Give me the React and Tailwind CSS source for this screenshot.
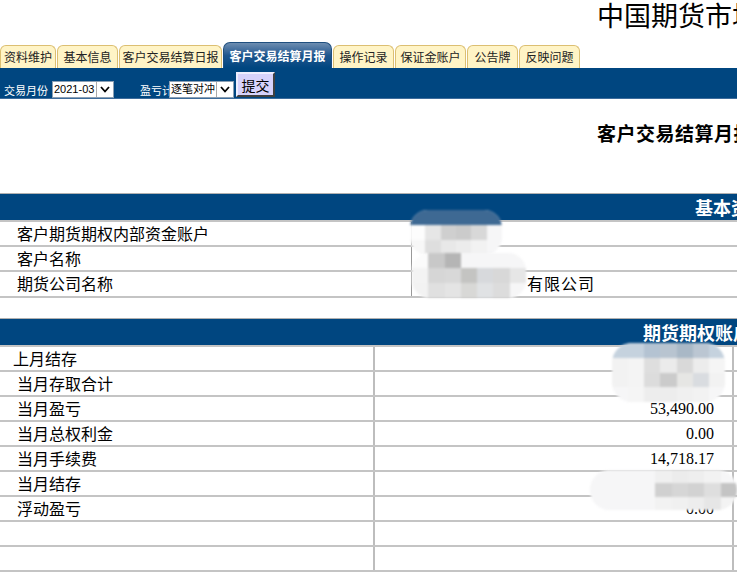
const cjk = { fontFamily: '"Noto Sans CJK SC", "Noto Sans", sans-serif' }
const serif = { fontFamily: '"Liberation Serif", "Noto Sans CJK SC", serif' }

const tabs = [
  { label: '资料维护', w: 'w-[56px]' },
  { label: '基本信息', w: 'w-[61px]' },
  { label: '客户交易结算日报', w: 'w-[103px]' },
  { label: '客户交易结算月报', w: 'w-[109px]', active: true },
  { label: '操作记录', w: 'w-[61px]' },
  { label: '保证金账户', w: 'w-[71px]' },
  { label: '公告牌', w: 'w-[51px]' },
  { label: '反映问题', w: 'w-[61px]' },
]

const basicRows = [
  { label: '客户期货期权内部资金账户', h: 'h-[25px]' },
  { label: '客户名称', h: 'h-[25px]' },
  { label: '期货公司名称', h: 'h-[26px]', company: true },
]

const accountRows = [
  { label: '上月结存', value: '', first: true },
  { label: '当月存取合计', value: '' },
  { label: '当月盈亏', value: '53,490.00' },
  { label: '当月总权利金', value: '0.00' },
  { label: '当月手续费', value: '14,718.17' },
  { label: '当月结存', value: '' },
  { label: '浮动盈亏', value: '0.00' },
  { label: '', value: '' },
  { label: '', value: '' },
]

function FakeSelect({ text, w }) {
  return (
    <div className={`flex items-stretch h-[17px] bg-white border border-[#8a9fb4] ${w}`}>
      <span className="flex-1 pl-[1px] text-[11px] leading-[15px] text-black overflow-hidden" style={{ fontFamily: '"Liberation Sans", "Noto Sans CJK SC", sans-serif' }}>
        {text}
      </span>
      <span className="w-[17px] flex items-center justify-center bg-white border-l border-[#aaa]">
        <svg width="10" height="7" viewBox="0 0 10 7">
          <path d="M1 1 L5 5.5 L9 1" fill="none" stroke="#000" strokeWidth="1.8" />
        </svg>
      </span>
    </div>
  )
}

function Blob({ className, cells }) {
  return (
    <div className={`absolute rounded-[18px] bg-[#f6f6f7] blur-[1px] overflow-hidden grid ${className}`}>
      {cells.map((c, i) => (
        <div key={i} style={{ background: c }} />
      ))}
    </div>
  )
}

export default function App() {
  return (
    <div className="relative w-full h-[578px] overflow-hidden bg-white whitespace-nowrap" style={cjk}>
      {/* page title */}
      <div className="h-[42px] pl-[597px]">
        <span className="text-[27px] leading-[30px] text-black">中国期货市场监控中心</span>
      </div>

      {/* tabs */}
      <div className="flex items-end h-[26px] gap-[1px]">
        {tabs.map((t) =>
          t.active ? (
            <div
              key={t.label}
              className={`${t.w} h-[26px] rounded-t-[7px] border border-b-0 border-[#1f4f7f] bg-gradient-to-b from-[#6d8db0] via-[#1d568e] to-[#004680] text-white font-bold text-[12px] flex items-center justify-center`}
            >
              {t.label}
            </div>
          ) : (
            <div
              key={t.label}
              className={`${t.w} h-[23px] rounded-t-[6px] border border-b-0 border-[#dcbf72] bg-[#fff4c6] text-[#222] text-[12px] flex items-center justify-center`}
            >
              {t.label}
            </div>
          )
        )}
      </div>

      {/* blue form bar */}
      <div className="h-[31px] bg-[#004680] border-b border-[#3d6c9c] flex items-end text-white text-[11px]">
        <span className="ml-[4px] mb-[1px] leading-[14px] w-[42px]">交易月份</span>
        <div className="ml-[6px]">
          <FakeSelect text="2021-03" w="w-[62px]" />
        </div>
        <span className="ml-[26px] mb-[1px] leading-[14px] w-[29px] overflow-hidden">盈亏计</span>
        <FakeSelect text="逐笔对冲" w="w-[65px]" />
        <button className="ml-[2px] mb-[1px] w-[39px] h-[25px] bg-[#d6d2fb] border-2 border-t-[#eeeeff] border-l-[#eeeeff] border-r-[#404040] border-b-[#404040] text-black text-[14px] leading-[20px]">
          提交
        </button>
      </div>

      {/* report title */}
      <div className="pl-[597px] pt-[22px] h-[94px]">
        <span className="text-[19px] leading-[24px] font-bold text-black tracking-[0.5px]">客户交易结算月报</span>
      </div>

      {/* basic info table */}
      <div className="border-t border-[#b0b0b0]">
        <div className="h-[28px] bg-[#004680] border-b-2 border-[#c4c4c4] pl-[695px] text-white font-bold text-[18px] leading-[26px]">
          基本资料
        </div>
        {basicRows.map((r) => (
          <div key={r.label} className={`flex ${r.h} border-b-2 border-[#c4c4c4]`}>
            <div className="w-[411px] pl-[17px] text-[16px] leading-[23px] text-black">{r.label}</div>
            <div className="flex-1 border-l border-[#999] text-[16px] leading-[23px] text-black">
              {r.company ? <span className="pl-[115px] tracking-[1px]">有限公司</span> : null}
            </div>
          </div>
        ))}
      </div>

      {/* account table */}
      <div className="mt-[20px] border-t border-[#b0b0b0]">
        <div className="h-[28px] bg-[#004680] border-b-2 border-[#c4c4c4] pl-[643px] text-white font-bold text-[18px] leading-[26px]">
          期货期权账户资金状况
        </div>
        {accountRows.map((r, i) => (
          <div key={i} className="flex h-[25px] border-b-2 border-[#c4c4c4]">
            <div className={`w-[373px] text-[16px] leading-[23px] text-black ${r.first ? 'pl-[13px]' : 'pl-[17px]'}`}>
              {r.label}
            </div>
            <div
              className="w-[359px] border-l-2 border-[#bdbdbd] pr-[18px] text-right text-[16px] leading-[24px] text-black"
              style={serif}
            >
              {r.value}
            </div>
            <div className="flex-1 border-l-2 border-[#bdbdbd]" />
          </div>
        ))}
      </div>

      {/* privacy blur patches */}
      <Blob
        className="left-[410px] top-[210px] w-[92px] h-[45px] grid-cols-6 grid-rows-3"
        cells={['#3e6993', '#3e6993', '#3e6993', '#3e6993', '#3e6993', '#3e6993', '#fdfdfd', '#e6e6e6', '#cfcfcf', '#cbcbcb', '#d8d8d8', '#f6f6f7', '#f7f7f7', '#dedede', '#e8e8e8', '#ececec', '#f2f2f2', '#f6f6f7']}
      />
      <Blob
        className="left-[412px] top-[253px] w-[114px] h-[45px] grid-cols-7 grid-rows-3 rounded-[14px]"
        cells={['#fbfbfb', '#c8c8c8', '#b5b5b5', '#f6f6f7', '#f6f6f7', '#f6f6f7', '#f6f6f7', '#f3f3f3', '#d6d6d6', '#d8d8d8', '#c4c4c2', '#d7d9dc', '#d8d8d8', '#e6e6e6', '#f2f2f2', '#e0e0e0', '#e4e4e4', '#d8d8d6', '#e0e2e4', '#dcdcdc', '#f6f6f7']}
      />
      <Blob
        className="left-[612px] top-[343px] w-[113px] h-[59px] grid-cols-7 grid-rows-4 rounded-[20px]"
        cells={['#c5d2de', '#c5d2de', '#b4c3d2', '#b8c4d0', '#a9b8c6', '#bbc6d2', '#c5d2de', '#f2f2f2', '#f4f4f4', '#dedede', '#ebebeb', '#d9d9d9', '#ececec', '#f5f5f5', '#f2f2f2', '#f4f4f4', '#dcdcdc', '#cbcbcb', '#e6e6e4', '#d9dce0', '#f2f2f2', '#f6f6f7', '#f5f5f5', '#ededed', '#ededed', '#f0f0f0', '#f2f2f2', '#f6f6f7']}
      />
      <Blob
        className="left-[590px] top-[470px] w-[147px] h-[40px] grid-cols-9 grid-rows-3 rounded-[20px]"
        cells={['#f6f6f7', '#f6f6f7', '#f6f6f7', '#f6f6f7', '#f0f0f0', '#ececec', '#eeeeee', '#f2f2f2', '#f6f6f7', '#f6f6f7', '#f6f6f7', '#f6f6f7', '#f6f6f7', '#d0d0d0', '#d6d6d6', '#d2d2d2', '#dedede', '#c4c4c4', '#f6f6f7', '#f6f6f7', '#f6f6f7', '#f6f6f7', '#f2f2f2', '#f0f0f0', '#ededed', '#e6e6e6', '#f3f3f3']}
      />
    </div>
  )
}
